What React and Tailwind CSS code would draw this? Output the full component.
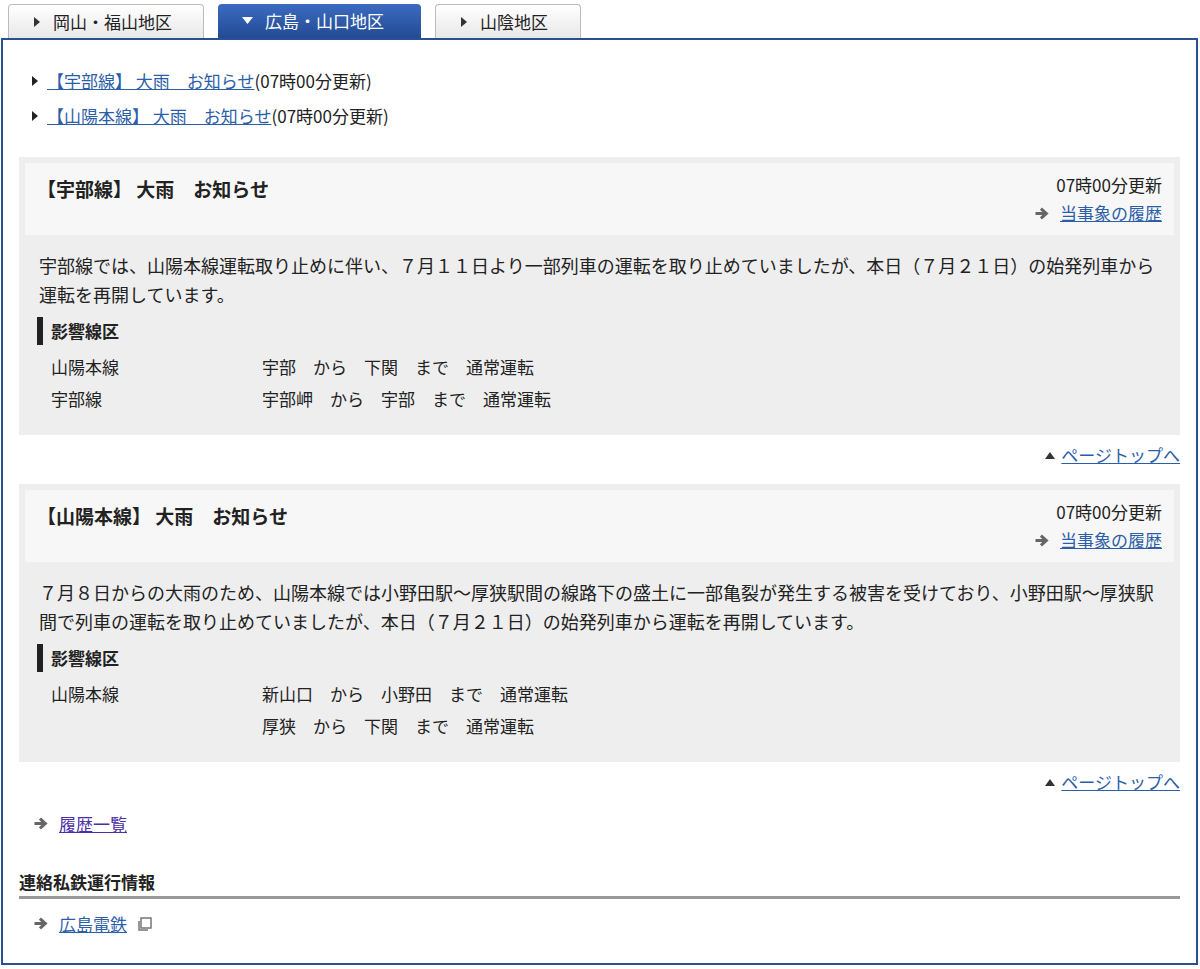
const F = { fontFamily: '"Noto Sans CJK JP", "Liberation Sans", sans-serif' };

const Arrow = () => (
  <svg width="16" height="13" viewBox="0 0 14 12" className="shrink-0"><path d="M1 6h8M6 1.5l5 4.5-5 4.5" stroke="#666" strokeWidth="2.8" fill="none" /></svg>
);
const Tri = ({ c = "#333" }) => (
  <svg width="8" height="10" viewBox="0 0 8 10"><path d="M1 0l6 5-6 5z" fill={c} /></svg>
);

function Card({ title, body, rows }) {
  return (
    <div className="mx-[16px] bg-[#eeeeee] px-[6px] pt-[6px] pb-[20px]">
      <div className="bg-[#f7f7f7] flex justify-between px-[12px] pt-[10px] pb-[8px]">
        <div className="text-[19px] font-bold pt-[2px]">{title}</div>
        <div className="text-right text-[17px] leading-[28px] -mt-[2px]">
          <div>07時00分更新</div>
          <div className="flex items-center gap-[10px] justify-end"><Arrow /><a className="text-[#2c5ea8] underline">当事象の履歴</a></div>
        </div>
      </div>
      <div className="px-[14px] pt-[16px] text-[18px] leading-[29px]">{body}</div>
      <div className="mx-[12px] mt-[8px] border-l-[6px] border-[#222] pl-[8px] text-[17px] font-bold leading-[28px]">影響線区</div>
      <div className="mt-[6px] text-[17px] leading-[32px]">
        {rows.map((r, i) => (
          <div key={i} className="flex">
            <div className="w-[237px] pl-[26px]">{r[0]}</div>
            <div className="whitespace-pre">{r[1]}</div>
          </div>
        ))}
      </div>
    </div>
  );
}

const PageTop = () => (
  <div className="flex justify-end items-center gap-[6px] pr-[16px] mt-[8px] mb-[17px] text-[17px] leading-[24px]">
    <svg width="10" height="7" viewBox="0 0 10 7"><path d="M5 0l5 7H0z" fill="#333" /></svg>
    <a className="text-[#2c5ea8] underline">ページトップへ</a>
  </div>
);

export default function App() {
  return (
    <div style={F} className="w-[1200px] h-[969px] bg-white text-[#222] pt-[4px]">
      <div className="flex items-end gap-[14px] pl-[8px] h-[34px]">
        <div className="w-[196px] h-[34px] border border-[#bbb] border-b-0 rounded-t-[4px] bg-gradient-to-b from-white to-[#e8e8e8] flex items-center gap-[12px] pl-[24px] text-[17px]"><Tri />岡山・福山地区</div>
        <div className="w-[203px] h-[34px] rounded-t-[4px] bg-gradient-to-b from-[#3b6bc0] to-[#234b94] text-white flex items-center gap-[12px] pl-[24px] text-[17px]">
          <svg width="11" height="8" viewBox="0 0 11 8"><path d="M0 0h11L5.5 7z" fill="#fff" /></svg>広島・山口地区</div>
        <div className="w-[146px] h-[34px] border border-[#bbb] border-b-0 rounded-t-[4px] bg-gradient-to-b from-white to-[#e8e8e8] flex items-center gap-[12px] pl-[24px] text-[17px]"><Tri />山陰地区</div>
      </div>
      <div className="mx-[1px] w-[1197px] h-[927px] border-2 border-[#2a4f93] pt-[23px]">
        <div className="pl-[28px] text-[17px] leading-[35px]">
          <div className="flex items-center gap-[8px]"><Tri c="#222" /><span><a className="text-[#2c5ea8] underline">【宇部線】 大雨　お知らせ</a>(07時00分更新)</span></div>
          <div className="flex items-center gap-[8px]"><Tri c="#222" /><span><a className="text-[#2c5ea8] underline">【山陽本線】 大雨　お知らせ</a>(07時00分更新)</span></div>
        </div>
        <div className="h-[24px]" />
        <Card title="【宇部線】 大雨　お知らせ"
          body="宇部線では、山陽本線運転取り止めに伴い、７月１１日より一部列車の運転を取り止めていましたが、本日（７月２１日）の始発列車から運転を再開しています。"
          rows={[["山陽本線", "宇部　から　下関　まで　通常運転"], ["宇部線", "宇部岬　から　宇部　まで　通常運転"]]} />
        <PageTop />
        <Card title="【山陽本線】 大雨　お知らせ"
          body="７月８日からの大雨のため、山陽本線では小野田駅～厚狭駅間の線路下の盛土に一部亀裂が発生する被害を受けており、小野田駅～厚狭駅間で列車の運転を取り止めていましたが、本日（７月２１日）の始発列車から運転を再開しています。"
          rows={[["山陽本線", "新山口　から　小野田　まで　通常運転"], ["", "厚狭　から　下関　まで　通常運転"]]} />
        <PageTop />
        <div className="flex items-center gap-[10px] pl-[30px] text-[17px] mt-[14px]"><Arrow /><a className="text-[#4b2fa8] underline">履歴一覧</a></div>
        <div className="mx-[16px] mt-[32px] border-b-[3px] border-[#999] pb-[2px] text-[17px] font-bold">連絡私鉄運行情報</div>
        <div className="flex items-center gap-[10px] pl-[30px] text-[17px] mt-[12px]"><Arrow /><a className="text-[#2c5ea8] underline">広島電鉄</a>
          <svg width="16" height="16" viewBox="0 0 16 16"><rect x="4" y="2" width="10" height="10" fill="none" stroke="#777" strokeWidth="1.5" /><path d="M2 5v9h9" fill="none" stroke="#777" strokeWidth="1.5" /></svg>
        </div>
      </div>
    </div>
  );
}
